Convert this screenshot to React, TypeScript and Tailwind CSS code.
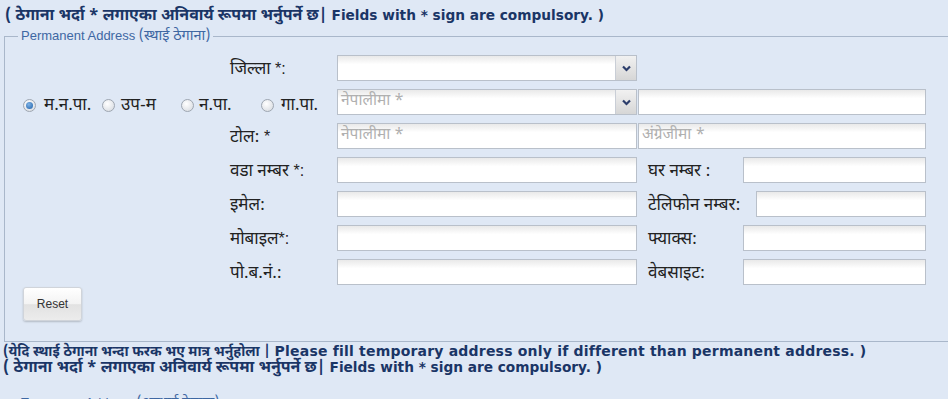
import React from "react";

const devFont = "font-['Noto_Sans_Devanagari','Lohit_Devanagari','Noto_Sans','Liberation_Sans',sans-serif]";
const inputCls =
  "h-[26px] border border-[#b9c0ca] bg-[linear-gradient(to_bottom,#e9e9e9,#ffffff_35%)] px-[3px] text-[15.5px] text-[#b0b0b0] flex items-center whitespace-nowrap " +
  devFont;

function Input({ w, ph, grow }: { w?: string; ph?: string; grow?: boolean }) {
  return (
    <div className={`${inputCls} ${grow ? "flex-1" : ""}`} style={w ? { width: w } : undefined}>
      {ph ?? ""}
    </div>
  );
}

function Select({ w, ph }: { w: string; ph?: string }) {
  return (
    <div className={`${inputCls} relative`} style={{ width: w }}>
      <span>{ph ?? ""}</span>
      <div className="absolute right-0 top-0 bottom-0 w-[21px] border-l border-[#c9ced6] bg-[linear-gradient(to_bottom,#f1f1f1,#d6d6d6)] flex items-center justify-center">
        <svg width="9" height="7" viewBox="0 0 9 7">
          <polyline points="1,1.5 4.5,5 8,1.5" fill="none" stroke="#2c3d6b" strokeWidth="2.2" />
        </svg>
      </div>
    </div>
  );
}

function Radio({ checked }: { checked?: boolean }) {
  return (
    <span className="inline-flex shrink-0 w-[13px] h-[13px] rounded-full border border-[#9ea6b1] bg-[radial-gradient(circle_at_40%_35%,#ffffff,#d3d7dd)] items-center justify-center">
      {checked && (
        <span className="w-[7px] h-[7px] rounded-full bg-[radial-gradient(circle_at_40%_35%,#7fb3e6,#1d5fa8)]" />
      )}
    </span>
  );
}

const labelCls = `text-[17px] leading-[20px] text-[#222] whitespace-nowrap ${devFont}`;
const starCls = "text-[16px] font-['Liberation_Sans',sans-serif]";

function Row({ children }: { children: React.ReactNode }) {
  return <div className="flex items-center h-[26px] w-[921px]">{children}</div>;
}

function LeftLabel({ text, star }: { text: string; star?: string }) {
  return (
    <div className="w-[332px] pl-[225px]">
      <span className={labelCls}>
        {text}
        {star && <span className={starCls}>{star}</span>}
      </span>
    </div>
  );
}

function RightLabel({ text, w }: { text: string; w: string }) {
  return (
    <div className="ml-[11px]" style={{ width: w }}>
      <span className={labelCls}>{text}</span>
    </div>
  );
}

const headCls =
  "leading-[15px] font-bold text-[#1a3566] font-['DejaVu_Sans',sans-serif] whitespace-nowrap";
const devHead = `${devFont} text-[16px] leading-[15px]`;

export default function App() {
  return (
    <div className="w-[948px] h-[399px] overflow-hidden bg-[#dfe8f5]">
      <div className={`${headCls} text-[13.7px] pl-[5px] pt-[8px]`}>
        <span className={devHead}>( ठेगाना भर्दा * लगाएका अनिवार्य रूपमा भर्नुपर्ने छ| </span>
        Fields with * sign are compulsory. )
      </div>

      <fieldset className="mt-[4px] ml-[4px] w-[960px] border border-[#a9b7ca] pt-[10px] pb-[20px]">
        <legend className="ml-[13px] px-[3px] text-[13px] leading-[16px] text-[#3e67a3] font-['Liberation_Sans',sans-serif]">
          Permanent Address <span className={`${devFont} text-[14.5px] leading-[16px]`}>(स्थाई ठेगाना)</span>
        </legend>

        <div className="flex flex-col gap-[8px]">
          <Row>
            <LeftLabel text="जिल्ला " star="*:" />
            <Select w="300px" />
          </Row>

          <Row>
            <div className="w-[332px] pl-[18px] flex items-center pt-[7px]">
              <Radio checked />
              <span className={`${labelCls} ml-[8px] w-[58px]`}>म.न.पा.</span>
              <Radio />
              <span className={`${labelCls} ml-[6px] w-[60px]`}>उप-म</span>
              <Radio />
              <span className={`${labelCls} ml-[5px] w-[62px]`}>न.पा.</span>
              <Radio />
              <span className={`${labelCls} ml-[7px]`}>गा.पा.</span>
            </div>
            <Select w="300px" ph="नेपालीमा *" />
            <div className="ml-[1px] flex-1 flex">
              <Input grow />
            </div>
          </Row>

          <Row>
            <LeftLabel text="टोल: " star="*" />
            <Input w="300px" ph="नेपालीमा *" />
            <div className="ml-[1px] flex-1 flex">
              <Input grow ph="अंग्रेजीमा *" />
            </div>
          </Row>

          <Row>
            <LeftLabel text="वडा नम्बर " star="*:" />
            <Input w="300px" />
            <RightLabel text="घर नम्बर :" w="95px" />
            <Input grow />
          </Row>

          <Row>
            <LeftLabel text="इमेल:" />
            <Input w="300px" />
            <RightLabel text="टेलिफोन नम्बर:" w="108px" />
            <Input grow />
          </Row>

          <Row>
            <LeftLabel text="मोबाइल" star="*:" />
            <Input w="300px" />
            <RightLabel text="फ्याक्स:" w="95px" />
            <Input grow />
          </Row>

          <Row>
            <LeftLabel text="पो.ब.नं.:" />
            <Input w="300px" />
            <RightLabel text="वेबसाइट:" w="95px" />
            <Input grow />
          </Row>
        </div>

        <button className="mt-[2px] ml-[18px] w-[59px] h-[34px] rounded-[3px] border border-[#d0d4da] bg-[linear-gradient(to_bottom,#ffffff,#f3f3f3_50%,#e2e2e2_52%,#ececec)] shadow-[0_1px_2px_rgba(0,0,0,0.2)] text-[12px] text-[#333] font-['Liberation_Sans',sans-serif]">
          Reset
        </button>
      </fieldset>

      <div className={`${headCls} text-[14px] tracking-[0.2px] pl-[3px] mt-[2px]`}>
        <span className={`${devFont} text-[14px] tracking-normal leading-[15px]`}>(येदि स्थाई ठेगाना भन्दा फरक भए मात्र भर्नुहोला | </span>
        Please fill temporary address only if different than permanent address. )
      </div>
      <div className={`${headCls} text-[13.7px] pl-[3px]`}>
        <span className={devHead}>( ठेगाना भर्दा * लगाएका अनिवार्य रूपमा भर्नुपर्ने छ| </span>
        Fields with * sign are compulsory. )
      </div>

      <fieldset className="mt-[19px] ml-[4px] w-[960px] border border-[#a9b7ca] pt-[9px] pb-[18px]">
        <legend className="ml-[13px] px-[3px] text-[13px] leading-[16px] text-[#3e67a3] font-['Liberation_Sans',sans-serif]">
          Temporary Address <span className={`${devFont} text-[14.5px]`}>(अस्थाई ठेगाना)</span>
        </legend>
        <div className="h-[40px]" />
      </fieldset>
    </div>
  );
}
